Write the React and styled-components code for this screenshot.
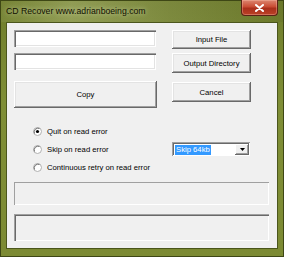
import React from "react";
import styled, { createGlobalStyle } from "styled-components";

const Global = createGlobalStyle`
  html, body {
    margin: 0;
    padding: 0;
    background: #ffffff;
  }
  body {
    font-family: "Liberation Sans", Arial, sans-serif;
  }
`;

const Frame = styled.div`
  width: 284px;
  height: 257px;
  box-sizing: border-box;
  display: flex;
  flex-direction: column;
  background: linear-gradient(180deg, #6f7d2c 0%, #7f8e36 40%, #7c8a33 100%);
  border: 1px solid #3e4715;
  padding: 0 5px 7px 5px;
`;

const TitleBar = styled.div`
  height: 21px;
  display: flex;
  align-items: flex-start;
  justify-content: space-between;
  background: linear-gradient(90deg, rgba(255,255,255,0.05) 0%, rgba(230,235,190,0.28) 25%, rgba(255,255,255,0.08) 60%, rgba(0,0,0,0.05) 100%);
  margin: 0 -5px;
  padding: 0 5px;
`;

const Title = styled.span`
  font-size: 8.7px;
  line-height: 21px;
  color: #101000;
  text-shadow: 0 0 5px rgba(235, 240, 200, 0.8);
`;

const CloseButton = styled.div`
  width: 35px;
  height: 15px;
  margin-top: -1px;
  border: 1px solid #5a2115;
  border-top: none;
  border-radius: 0 0 4px 4px;
  background: linear-gradient(180deg, #dc8670 0%, #c94c34 45%, #a92f1b 55%, #bb4127 100%);
  display: flex;
  align-items: center;
  justify-content: center;
  box-shadow: inset 0 0 0 1px rgba(255, 200, 180, 0.35);
`;

const Client = styled.div`
  flex: 1;
  background: #f0f0f0;
  border: 1px solid #4b561c;
  display: flex;
  flex-direction: column;
  padding: 7px 8px 7px 7px;
  font-size: 7.7px;
  color: #000;
`;

const TopRow = styled.div`
  display: flex;
  gap: 15px;
`;

const LeftCol = styled.div`
  width: 143px;
  display: flex;
  flex-direction: column;
`;

const RightCol = styled.div`
  width: 79px;
  display: flex;
  flex-direction: column;
`;

const Edit = styled.div`
  width: 142px;
  height: 17px;
  box-sizing: border-box;
  background: #ffffff;
  margin-bottom: ${(p) => p.$gap}px;
  box-shadow: inset 1px 1px #a0a0a0, inset 2px 2px #696969, inset -1px -1px #ffffff, inset -2px -2px #e3e3e3;
`;

const Button = styled.div`
  height: ${(p) => p.$h}px;
  margin-bottom: ${(p) => p.$gap || 0}px;
  box-sizing: border-box;
  background: #f0f0f0;
  display: flex;
  align-items: center;
  justify-content: center;
  box-shadow: inset -1px -1px #696969, inset 1px 1px #ffffff, inset -2px -2px #a0a0a0, inset 2px 2px #e3e3e3;
`;

const RadioGroup = styled.div`
  display: flex;
  flex-direction: column;
  margin-top: 14px;
  padding-left: 19px;
`;

const RadioRow = styled.div`
  height: 18px;
  display: flex;
  align-items: center;
`;

const RadioLabel = styled.div`
  display: flex;
  align-items: center;
  gap: 5px;
  width: 139px;
`;

const Combo = styled.div`
  width: 78px;
  height: 14px;
  box-sizing: border-box;
  background: #ffffff;
  display: flex;
  align-items: center;
  padding: 2px 1px 1px 2px;
  box-shadow: inset 1px 1px #a0a0a0, inset -1px -1px #ffffff, inset 2px 2px #696969;
`;

const Selected = styled.span`
  background: #3399ff;
  color: #ffffff;
  line-height: 10px;
  padding: 0 1px;
  margin-left: 1px;
`;

const DropButton = styled.div`
  margin-left: auto;
  width: 14px;
  height: 11px;
  box-sizing: border-box;
  background: #f0f0f0;
  display: flex;
  align-items: center;
  justify-content: center;
  box-shadow: inset -1px -1px #696969, inset 1px 1px #ffffff, inset -2px -2px #a0a0a0;
`;

const Panel = styled.div`
  height: ${(p) => p.$h}px;
  box-sizing: border-box;
  margin-top: ${(p) => p.$gap}px;
  background: #f0f0f0;
  box-shadow: ${(p) =>
    p.$sunken
      ? "inset 1px 1px #a0a0a0, inset 2px 2px #696969, inset -1px -1px #ffffff"
      : "inset 1px 1px #a0a0a0, inset -1px -1px #ffffff"};
`;

function Radio({ checked }) {
  return (
    <svg width="9" height="9" viewBox="0 0 9 9">
      <circle cx="4.5" cy="4.5" r="4" fill="#ffffff" stroke="#b0b0b0" strokeWidth="1" />
      <path d="M1.4 6.5 A4 4 0 0 1 6.5 1.4" fill="none" stroke="#707070" strokeWidth="1" />
      {checked && <circle cx="4.5" cy="4.5" r="1.6" fill="#000000" />}
    </svg>
  );
}

function App() {
  return (
    <Frame>
      <Global />
      <TitleBar>
        <Title>CD Recover www.adrianboeing.com</Title>
        <CloseButton>
          <svg width="9" height="8" viewBox="0 0 9 8">
            <path d="M1 1 L8 7 M8 1 L1 7" stroke="#ffffff" strokeWidth="2" strokeLinecap="round" />
          </svg>
        </CloseButton>
      </TitleBar>
      <Client>
        <TopRow>
          <LeftCol>
            <Edit $gap={6} />
            <Edit $gap={11} />
            <Button $h={27}>Copy</Button>
          </LeftCol>
          <RightCol>
            <Button $h={19} $gap={4}>Input File</Button>
            <Button $h={20} $gap={9}>Output Directory</Button>
            <Button $h={20}>Cancel</Button>
          </RightCol>
        </TopRow>
        <RadioGroup>
          <RadioRow>
            <RadioLabel><Radio checked />Quit on read error</RadioLabel>
          </RadioRow>
          <RadioRow>
            <RadioLabel><Radio />Skip on read error</RadioLabel>
            <Combo>
              <Selected>Skip 64kb</Selected>
              <DropButton>
                <svg width="5" height="3" viewBox="0 0 5 3">
                  <path d="M0 0 H5 L2.5 3 Z" fill="#000000" />
                </svg>
              </DropButton>
            </Combo>
          </RadioRow>
          <RadioRow>
            <RadioLabel><Radio />Continuous retry on read error</RadioLabel>
          </RadioRow>
        </RadioGroup>
        <Panel $h={23} $gap={6} />
        <Panel $h={27} $gap={9} $sunken />
      </Client>
    </Frame>
  );
}

export default App;
